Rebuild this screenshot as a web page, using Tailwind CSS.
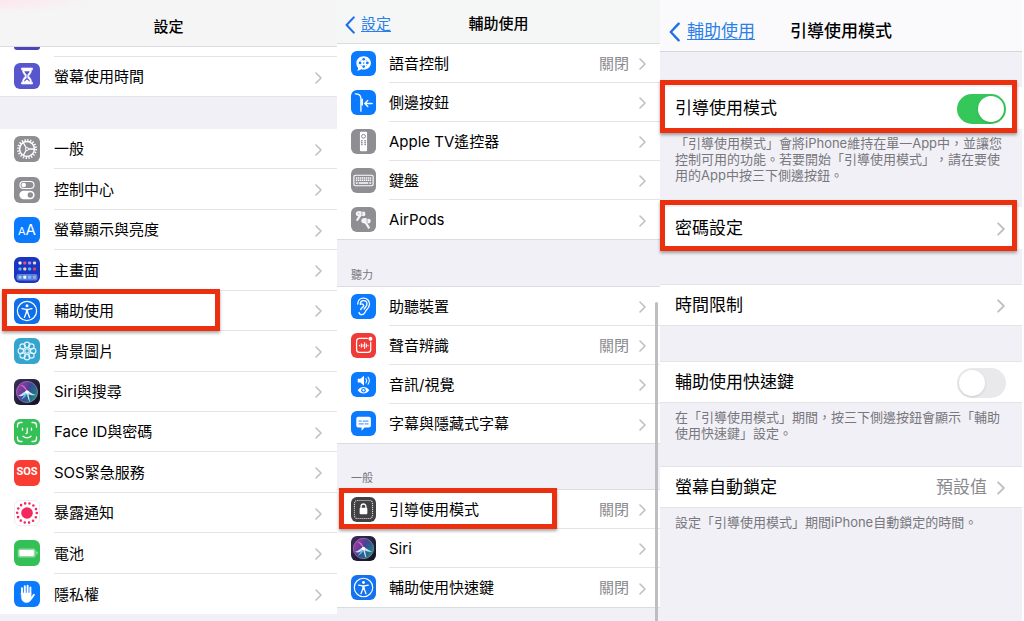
<!DOCTYPE html>
<html lang="zh-Hant">
  <head>
    <meta charset="UTF-8" />
    <meta name="viewport" content="width=device-width, initial-scale=1.0" />
    <title>引導使用模式</title>
    <script src="https://cdn.jsdelivr.net/npm/@tailwindcss/browser@4"></script>
  </head>
  <body class="bg-white text-black font-['Inter','Noto_Sans_CJK_TC',sans-serif] [text-spacing-trim:space-all]">

    <!-- shared icons -->
    <svg class="absolute size-0" aria-hidden="true">
      <defs>
        <linearGradient id="siri-bg" x1="0" y1="0" x2="1" y2="1">
          <stop offset="0" stop-color="#3a2f5c" />
          <stop offset="1" stop-color="#10121f" />
        </linearGradient>
        <linearGradient id="siri-orb" x1="0" y1="0.2" x2="1" y2="0.8">
          <stop offset="0" stop-color="#b13aa6" />
          <stop offset="0.45" stop-color="#4a3f96" />
          <stop offset="0.75" stop-color="#1f6f86" />
          <stop offset="1" stop-color="#2a9c8c" />
        </linearGradient>
      </defs>
      <symbol id="chevron" viewBox="0 0 7 12">
        <path d="M1 1l5 5-5 5" fill="none" stroke="currentColor" stroke-width="1.6" stroke-linecap="round" stroke-linejoin="round" />
      </symbol>
      <symbol id="back" viewBox="0 0 10 18">
        <path d="M8.8 1.4L1.6 9l7.2 7.6" fill="none" stroke="currentColor" stroke-width="2.1" stroke-linecap="round" stroke-linejoin="round" />
      </symbol>
      <symbol id="person" viewBox="0 0 26 26">
        <circle cx="13" cy="13" r="9.6" fill="none" stroke="#fff" stroke-width="1.2" />
        <circle cx="13" cy="7.8" r="1.5" fill="#fff" />
        <path d="M8 10.600l3.800.7h2.400l3.800-.7M13 11.600v3.200" fill="none" stroke="#fff" stroke-width="1.300" stroke-linecap="round" />
        <path d="M11.800 11.300h2.400v3.500h-2.400z" fill="#fff" />
        <path d="M12.300 14.400l-1.900 5M13.700 14.400l1.900 5" fill="none" stroke="#fff" stroke-width="1.300" stroke-linecap="round" />
      </symbol>
      <symbol id="siri" viewBox="0 0 26 26">
        <rect width="26" height="26" fill="url(#siri-bg)" />
        <circle cx="13" cy="13" r="10.6" fill="url(#siri-orb)" stroke="#9a86b8" stroke-width=".7" />
        <path d="M4 16.500c4-.5 6-4.500 9-4.500s4 3 9 4c-4 1-6-.3-7.400-.8L16 23c-2-2-2.400-5.500-3.200-8C10 15.500 8 18.500 4 16.500z" fill="#e9f6ff" opacity=".85" />
        <path d="M13 11.500C12 8 9 5.500 6.500 6 9 7.500 11 9.500 13 13z" fill="#f06ac0" />
        <path d="M13 12.500l-6 8c3-1 5-3 6.500-6z" fill="#4cc3f0" />
        <circle cx="13" cy="13" r="1.800" fill="#fff" />
      </symbol>
    </svg>

    <main class="grid min-h-screen grid-cols-[337fr_323fr_364fr]">

      <!-- Settings -->
      <section class="flex flex-col bg-[#f1f0f6] text-[15px]">
        <header class="flex h-[47px] items-center justify-center border-b border-[#dcdce0] bg-radial-[at_0%_0%] from-[#fde6ee] to-[#f5f5f5] to-20% pt-2">
          <h1 class="font-medium">設定</h1>
        </header>
        <div class="bg-white">
          <div class="h-[9px] pl-3.5">
            <span class="block h-[3px] w-[26px] rounded-b-md bg-[#4b45b5]"></span>
          </div>
          <a href="#" class="flex h-[41px] items-center gap-3.5 border-b border-[#e4e4e8] pl-3.5">
            <svg class="size-[26px] rounded-md bg-[#5856ce]" viewBox="0 0 26 26">
              <path d="M7.500 5h11v1.800h-1c0 3.200-1.600 4.700-3 6.200 1.400 1.500 3 3 3 6.200h1V21h-11v-1.800h1c0-3.200 1.600-4.700 3-6.200-1.400-1.500-3-3-3-6.200h-1z" fill="#fff" stroke="#fff" stroke-width=".6" stroke-linejoin="round" />
              <path d="M10.300 8.300h5.400c-.5 1.700-1.500 2.500-2.300 3.500v3.400c1.200.7 2.300 1.700 2.500 3.300h-5.800c.2-1.600 1.300-2.600 2.500-3.300v-3.400c-.8-1-1.800-1.800-2.300-3.500z" fill="#5856ce" />
              <path d="M10.800 19c.3-1.500 1.300-2.100 2.200-2.600.9.500 1.900 1.100 2.200 2.600z" fill="#fff" />
            </svg>
            <span class="flex flex-1 items-center justify-between self-stretch border-t border-[#e4e4e8] pt-0.5 pr-[15px]">螢幕使用時間
              <svg class="h-3 w-[7px] text-[#c0c0c4]"><use href="#chevron" /></svg>
            </span>
          </a>
        </div>

        <nav class="mt-8 mb-[7px] flex flex-1 flex-col bg-white">
          <a href="#" class="group flex min-h-10 flex-1 items-center gap-3.5 pl-3.5">
            <svg class="size-[26px] rounded-md bg-[#8e8e93]" viewBox="0 0 26 26" fill="none" stroke="#fff">
              <circle cx="13" cy="13" r="9" stroke-width="2" stroke-dasharray="1.300 1.527" />
              <circle cx="13" cy="13" r="7.400" stroke-width="1.500" />
              <circle cx="13" cy="13" r="1.500" stroke-width="1" />
              <path d="M14.500 13h5.500M12.200 11.700L9.500 7M12.200 14.300L9.500 19" stroke-width="1.300" />
            </svg>
            <span class="flex flex-1 items-center justify-between self-stretch border-b border-[#e4e4e8] pt-0.5 pr-[15px] group-last:border-0">一般
              <svg class="h-3 w-[7px] text-[#c0c0c4]"><use href="#chevron" /></svg>
            </span>
          </a>
          <a href="#" class="group flex min-h-10 flex-1 items-center gap-3.5 pl-3.5">
            <svg class="size-[26px] rounded-md bg-[#8e8e93]" viewBox="0 0 26 26">
              <rect x="6" y="4.500" width="14" height="7" rx="3.500" fill="none" stroke="#fff" stroke-width="1.200" />
              <circle cx="9.700" cy="8" r="2.300" fill="#fff" />
              <rect x="5.400" y="13.800" width="15.200" height="8.400" rx="4.200" fill="#fff" />
              <circle cx="16.300" cy="18" r="2.700" fill="#8e8e93" />
            </svg>
            <span class="flex flex-1 items-center justify-between self-stretch border-b border-[#e4e4e8] pt-0.5 pr-[15px] group-last:border-0">控制中心
              <svg class="h-3 w-[7px] text-[#c0c0c4]"><use href="#chevron" /></svg>
            </span>
          </a>
          <a href="#" class="group flex min-h-10 flex-1 items-center gap-3.5 pl-3.5">
            <span class="flex size-[26px] items-baseline justify-center rounded-md bg-[#0a7aff] leading-[26px] text-white"><span class="text-[11px]">A</span><span class="text-[15px]">A</span></span>
            <span class="flex flex-1 items-center justify-between self-stretch border-b border-[#e4e4e8] pt-0.5 pr-[15px] group-last:border-0">螢幕顯示與亮度
              <svg class="h-3 w-[7px] text-[#c0c0c4]"><use href="#chevron" /></svg>
            </span>
          </a>
          <a href="#" class="group flex min-h-10 flex-1 items-center gap-3.5 pl-3.5">
            <svg class="size-[26px] rounded-md bg-[#1a35c0]" viewBox="0 0 26 26">
              <rect x="2.500" y="17" width="21" height="6.500" rx="2" fill="#5f7fe0" />
              <g fill="#fff">
                <rect x="4.500" y="4.500" width="3" height="3" rx=".8" />
                <rect x="9.300" y="4.500" width="3" height="3" rx=".8" fill="#e0507c" />
                <rect x="14.100" y="4.500" width="3" height="3" rx=".8" fill="#b48cf0" />
                <rect x="19" y="4.500" width="3" height="3" rx=".8" fill="#d8dcc0" />
                <rect x="4.500" y="10.500" width="3" height="3" rx=".8" fill="#4fb4ff" />
                <rect x="9.300" y="10.500" width="3" height="3" rx=".8" fill="#f0d890" />
                <rect x="14.100" y="10.500" width="3" height="3" rx=".8" fill="#50b8ff" />
                <rect x="19" y="10.500" width="3" height="3" rx=".8" fill="#e0405c" />
                <rect x="4.500" y="18.700" width="3" height="3" rx=".8" fill="#8fe0c0" />
                <rect x="9.300" y="18.700" width="3" height="3" rx=".8" />
                <rect x="14.100" y="18.700" width="3" height="3" rx=".8" fill="#6cc4ff" />
                <rect x="19" y="18.700" width="3" height="3" rx=".8" fill="#a8a8b8" />
              </g>
            </svg>
            <span class="flex flex-1 items-center justify-between self-stretch border-b border-[#e4e4e8] pt-0.5 pr-[15px] group-last:border-0">主畫面
              <svg class="h-3 w-[7px] text-[#c0c0c4]"><use href="#chevron" /></svg>
            </span>
          </a>
          <a href="#" class="group relative flex min-h-10 flex-1 items-center gap-3.5 pl-3.5">
            <svg class="size-[26px] rounded-md bg-[#0f6fe8]"><use href="#person" /></svg>
            <span class="flex flex-1 items-center justify-between self-stretch border-b border-[#e4e4e8] pt-0.5 pr-[15px] group-last:border-0">輔助使用
              <svg class="h-3 w-[7px] text-[#c0c0c4]"><use href="#chevron" /></svg>
            </span>
            <span class="absolute -top-0.5 bottom-0 left-0.5 w-[218px] border-5 border-[#eb3010] shadow-[0_2px_3px_rgba(0,0,0,0.35)]"></span>
          </a>
          <a href="#" class="group flex min-h-10 flex-1 items-center gap-3.5 pl-3.5">
            <svg class="size-[26px] rounded-md bg-[#35a5cf]" viewBox="0 0 26 26" fill="none" stroke="#e4f6fc" stroke-width="1.100">
              <circle cx="13" cy="13" r="2.200" />
              <circle cx="13" cy="6.800" r="2.700" />
              <circle cx="17.400" cy="8.600" r="2.700" />
              <circle cx="19.200" cy="13" r="2.700" />
              <circle cx="17.400" cy="17.400" r="2.700" />
              <circle cx="13" cy="19.200" r="2.700" />
              <circle cx="8.600" cy="17.400" r="2.700" />
              <circle cx="6.800" cy="13" r="2.700" />
              <circle cx="8.600" cy="8.600" r="2.700" />
            </svg>
            <span class="flex flex-1 items-center justify-between self-stretch border-b border-[#e4e4e8] pt-0.5 pr-[15px] group-last:border-0">背景圖片
              <svg class="h-3 w-[7px] text-[#c0c0c4]"><use href="#chevron" /></svg>
            </span>
          </a>
          <a href="#" class="group flex min-h-10 flex-1 items-center gap-3.5 pl-3.5">
            <svg class="size-[26px] rounded-md"><use href="#siri" /></svg>
            <span class="flex flex-1 items-center justify-between self-stretch border-b border-[#e4e4e8] pt-0.5 pr-[15px] group-last:border-0">Siri與搜尋
              <svg class="h-3 w-[7px] text-[#c0c0c4]"><use href="#chevron" /></svg>
            </span>
          </a>
          <a href="#" class="group flex min-h-10 flex-1 items-center gap-3.5 pl-3.5">
            <svg class="size-[26px] rounded-md bg-[#34c056]" viewBox="0 0 26 26" fill="none" stroke="#fff" stroke-width="1.300" stroke-linecap="round">
              <path d="M3.500 8V6.500a3 3 0 013-3H8M18 3.500h1.500a3 3 0 013 3V8M22.500 18v1.500a3 3 0 01-3 3H18M8 22.500H6.500a3 3 0 01-3-3V18" />
              <path d="M8.500 9.200v2M17.500 9.200v2M13.200 9.200v4.300c0 .8-.4 1.100-1.200 1.100M9 17.300c2.200 2 5.800 2 8 0" />
            </svg>
            <span class="flex flex-1 items-center justify-between self-stretch border-b border-[#e4e4e8] pt-0.5 pr-[15px] group-last:border-0">Face ID與密碼
              <svg class="h-3 w-[7px] text-[#c0c0c4]"><use href="#chevron" /></svg>
            </span>
          </a>
          <a href="#" class="group flex min-h-10 flex-1 items-center gap-3.5 pl-3.5">
            <span class="flex size-[26px] items-center justify-center rounded-md bg-[#f93d33] font-[Roboto,sans-serif] text-[11px] font-bold text-white">SOS</span>
            <span class="flex flex-1 items-center justify-between self-stretch border-b border-[#e4e4e8] pt-0.5 pr-[15px] group-last:border-0">SOS緊急服務
              <svg class="h-3 w-[7px] text-[#c0c0c4]"><use href="#chevron" /></svg>
            </span>
          </a>
          <a href="#" class="group flex min-h-10 flex-1 items-center gap-3.5 pl-3.5">
            <svg class="size-[26px] rounded-md border border-[#efedf1] bg-white" viewBox="1 1 24 24">
              <circle cx="13" cy="13" r="5.800" fill="#f4285c" />
              <circle cx="13" cy="13" r="9.800" fill="none" stroke="#f4285c" stroke-width="2.600" stroke-linecap="round" stroke-dasharray="0 4.398" />
            </svg>
            <span class="flex flex-1 items-center justify-between self-stretch border-b border-[#e4e4e8] pt-0.5 pr-[15px] group-last:border-0">暴露通知
              <svg class="h-3 w-[7px] text-[#c0c0c4]"><use href="#chevron" /></svg>
            </span>
          </a>
          <a href="#" class="group flex min-h-10 flex-1 items-center gap-3.5 pl-3.5">
            <svg class="size-[26px] rounded-md bg-[#34c056]" viewBox="0 0 26 26">
              <rect x="3.800" y="8.500" width="17.800" height="9" rx="2.600" fill="#8edc9e" />
              <rect x="5.500" y="10" width="14.400" height="6" rx="1.300" fill="#fff" />
              <path d="M22.500 11.300c1.400.3 1.400 3.100 0 3.400z" fill="#c4efcc" />
            </svg>
            <span class="flex flex-1 items-center justify-between self-stretch border-b border-[#e4e4e8] pt-0.5 pr-[15px] group-last:border-0">電池
              <svg class="h-3 w-[7px] text-[#c0c0c4]"><use href="#chevron" /></svg>
            </span>
          </a>
          <a href="#" class="group flex min-h-10 flex-1 items-center gap-3.5 pl-3.5">
            <svg class="size-[26px] rounded-md bg-[#0a7aff]" viewBox="0 0 26 26" fill="#fff" stroke="#fff" stroke-linecap="round">
              <path d="M8 13V7.200M10.800 12V5.200M13.600 12V4.600M16.400 12V6.400M17.300 17.500l2.600-3.700" stroke-width="1.900" />
              <path d="M7.400 12h9.700v3.500l.7.800c-.5 3-2 5.200-5.100 5.200-3.500 0-5.300-2.300-5.300-6z" stroke-width=".6" />
            </svg>
            <span class="flex flex-1 items-center justify-between self-stretch border-b border-[#e4e4e8] pt-0.5 pr-[15px] group-last:border-0">隱私權
              <svg class="h-3 w-[7px] text-[#c0c0c4]"><use href="#chevron" /></svg>
            </span>
          </a>
        </nav>
      </section>

      <!-- Accessibility -->
      <section class="relative flex flex-col bg-[#f1f0f6] text-[15px]">
        <header class="grid h-11 grid-cols-[1fr_auto_1fr] items-center border-b border-[#dcdce0] bg-[#f5f6f6] px-2 pt-1.5">
          <a href="#" class="flex items-center gap-1.5 text-[#2b7fe6] underline underline-offset-2">
            <svg class="h-[18px] w-2.5 text-[#1c6fe8]"><use href="#back" /></svg>設定
          </a>
          <h1 class="font-medium">輔助使用</h1>
        </header>

        <nav class="border-b border-[#dcdce0] bg-white">
          <a href="#" class="group flex h-[39px] items-center gap-[13px] pl-3.5">
            <svg class="size-[25px] rounded-md bg-[#0a7aff]" viewBox="0 0 26 26">
              <path d="M13.200 5.500c4.300 0 7.500 3 7.500 6.900s-3.200 6.900-7.500 6.900c-1 0-2-.1-2.800-.4-1.200 1-2.600 1.500-4.200 1.500.9-.8 1.300-1.800 1.300-2.800-1.200-1.300-1.900-3.100-1.900-5.200 0-3.900 3.300-6.900 7.600-6.900z" fill="#fff" />
              <g fill="#0a7aff">
                <circle cx="13.200" cy="8.600" r="1.400" /><circle cx="13.200" cy="16.200" r="1.400" />
                <circle cx="9.400" cy="12.400" r="1.400" /><circle cx="17" cy="12.400" r="1.400" />
                <circle cx="13.200" cy="12.400" r=".8" />
                <circle cx="10.500" cy="9.700" r=".5" /><circle cx="15.900" cy="9.700" r=".5" />
                <circle cx="10.500" cy="15.100" r=".5" /><circle cx="15.900" cy="15.100" r=".5" />
              </g>
            </svg>
            <span class="flex flex-1 items-center gap-2.5 self-stretch border-b border-[#e4e4e8] pt-0.5 pr-3.5 group-last:border-0"><span class="flex-1">語音控制</span>
              <span class="text-[#8a8a8e]">關閉</span>
              <svg class="h-3 w-[7px] text-[#c0c0c4]"><use href="#chevron" /></svg>
            </span>
          </a>
          <a href="#" class="group flex h-[39px] items-center gap-[13px] pl-3.5">
            <svg class="size-[25px] rounded-md bg-[#0a7aff]" viewBox="0 0 26 26" fill="none" stroke="#fff" stroke-width="1.400" stroke-linecap="round" stroke-linejoin="round">
              <path d="M4.500 4c4 0 5.800 1.600 5.800 5v13M11.800 9.500v6M22 14h-7.500M17.500 10.800L14.300 14l3.200 3.200" />
            </svg>
            <span class="flex flex-1 items-center justify-between self-stretch border-b border-[#e4e4e8] pt-0.5 pr-3.5 group-last:border-0">側邊按鈕
              <svg class="h-3 w-[7px] text-[#c0c0c4]"><use href="#chevron" /></svg>
            </span>
          </a>
          <a href="#" class="group flex h-[39px] items-center gap-[13px] pl-3.5">
            <svg class="size-[25px] rounded-md bg-[#8e8e93]" viewBox="0 0 26 26">
              <rect x="9.300" y="2.800" width="7.400" height="20.400" rx="1.200" fill="#fff" />
              <g fill="none" stroke="#85858a">
                <circle cx="13" cy="7.600" r="2" stroke-width="1" />
                <path d="M11.300 11.500v5.500M14.700 11.500v5.500" stroke-width="1.500" stroke-dasharray="1.500 .6" />
              </g>
            </svg>
            <span class="flex flex-1 items-center justify-between self-stretch border-b border-[#e4e4e8] pt-0.5 pr-3.5 group-last:border-0">Apple TV遙控器
              <svg class="h-3 w-[7px] text-[#c0c0c4]"><use href="#chevron" /></svg>
            </span>
          </a>
          <a href="#" class="group flex h-[39px] items-center gap-[13px] pl-3.5">
            <svg class="size-[25px] rounded-md bg-[#8e8e93]" viewBox="0 0 26 26" fill="none" stroke="#fff">
              <rect x="3" y="7.500" width="20" height="11" rx="1.500" stroke-width="1.200" />
              <path d="M5 10.300h16M5 12.800h16" stroke-width="1.500" stroke-dasharray="1.500 .6" />
              <path d="M5 15.600h2M8 15.600h10M19 15.600h2" stroke-width="1.500" />
            </svg>
            <span class="flex flex-1 items-center justify-between self-stretch border-b border-[#e4e4e8] pt-0.5 pr-3.5 group-last:border-0">鍵盤
              <svg class="h-3 w-[7px] text-[#c0c0c4]"><use href="#chevron" /></svg>
            </span>
          </a>
          <a href="#" class="group flex h-[39px] items-center gap-[13px] pl-3.5">
            <svg class="size-[25px] rounded-md bg-[#8e8e93]" viewBox="0 0 26 26">
              <g fill="#f4f4f5">
                <ellipse cx="8.600" cy="7" rx="3.600" ry="2.900" />
                <ellipse cx="13" cy="7.200" rx="2" ry="2.500" />
                <ellipse cx="14.300" cy="14.300" rx="3.600" ry="2.900" />
                <ellipse cx="18.500" cy="14.600" rx="2" ry="2.500" />
              </g>
              <path d="M9.500 9l-3 4.300M15.500 16.500l3 5" stroke="#f4f4f5" stroke-width="2.300" stroke-linecap="round" />
              <path d="M11.300 5.200v3.600M16.700 12.600v3.500M7.200 6.500l1.300 1" stroke="#8e8e93" stroke-width=".7" />
            </svg>
            <span class="flex flex-1 items-center justify-between self-stretch border-b border-[#e4e4e8] pt-0.5 pr-3.5 group-last:border-0">AirPods
              <svg class="h-3 w-[7px] text-[#c0c0c4]"><use href="#chevron" /></svg>
            </span>
          </a>
        </nav>

        <h2 class="flex h-[46px] items-end pb-0.5 pl-3.5 text-[11px] leading-[18px] text-[#77777c]">聽力</h2>
        <nav class="border-y border-[#dcdce0] bg-white">
          <a href="#" class="group flex h-[39px] items-center gap-[13px] pl-3.5">
            <svg class="size-[25px] rounded-md bg-[#0a7aff]" viewBox="0 0 26 26" fill="none" stroke="#fff" stroke-width="1.400" stroke-linecap="round">
              <path d="M7 10.500C7 6.800 9.600 4.300 13 4.300s6.300 2.600 6.300 6.200c0 3.200-1.600 4.800-3.400 6.500-1.400 1.400-1.500 4.500-4.600 4.500-1.600 0-2.600-.8-2.900-2.200" />
              <path d="M9.700 10.500c0-2.100 1.400-3.600 3.400-3.600s3.500 1.500 3.500 3.600c0 2.600-2.200 3.300-2.900 5.200M9.700 10.800c2.500-1.300 4.300.6 3 2.400-.9 1.200-2.200 1.500-2.600 3" />
            </svg>
            <span class="flex flex-1 items-center justify-between self-stretch border-b border-[#e4e4e8] pt-0.5 pr-3.5 group-last:border-0">助聽裝置
              <svg class="h-3 w-[7px] text-[#c0c0c4]"><use href="#chevron" /></svg>
            </span>
          </a>
          <a href="#" class="group flex h-[39px] items-center gap-[13px] pl-3.5">
            <svg class="size-[25px] rounded-md bg-[#ee3b37]" viewBox="0 0 26 26" fill="none" stroke="#fff" stroke-linecap="round">
              <path d="M17 5.500H8.800a3 3 0 00-3 3v8.700a3 3 0 003 3h8.700a3 3 0 003-3V9.500" stroke-width="1.300" />
              <path d="M8.800 12.800v.4M10.700 11.200v3.600M12.500 12v2M14.200 9.800v6.400M16 11.500v3M17.700 12.700v.6" stroke-width="1.100" />
              <circle cx="20.200" cy="6" r="2.100" fill="#fff" stroke="none" />
            </svg>
            <span class="flex flex-1 items-center gap-2.5 self-stretch border-b border-[#e4e4e8] pt-0.5 pr-3.5 group-last:border-0"><span class="flex-1">聲音辨識</span>
              <span class="text-[#8a8a8e]">關閉</span>
              <svg class="h-3 w-[7px] text-[#c0c0c4]"><use href="#chevron" /></svg>
            </span>
          </a>
          <a href="#" class="group flex h-[39px] items-center gap-[13px] pl-3.5">
            <svg class="size-[25px] rounded-md bg-[#0a7aff]" viewBox="0 0 26 26">
              <path d="M7 7h2.700l3.800-3.200v10.400L9.700 11H7z" fill="#fff" />
              <path d="M15.500 6.700c1 1.400 1 3.200 0 4.600M17.700 5.300c1.700 2.300 1.700 5.100 0 7.400" fill="none" stroke="#fff" stroke-width="1.100" stroke-linecap="round" />
              <path d="M7 19c3.200-4.400 8.800-4.400 12 0-3.200 4.400-8.800 4.400-12 0z" fill="#fff" />
              <circle cx="13" cy="19" r="2.400" fill="#0a7aff" />
              <circle cx="13" cy="19" r="1.200" fill="#fff" />
            </svg>
            <span class="flex flex-1 items-center justify-between self-stretch border-b border-[#e4e4e8] pt-0.5 pr-3.5 group-last:border-0">音訊/視覺
              <svg class="h-3 w-[7px] text-[#c0c0c4]"><use href="#chevron" /></svg>
            </span>
          </a>
          <a href="#" class="group flex h-[39px] items-center gap-[13px] pl-3.5">
            <svg class="size-[25px] rounded-md bg-[#0a7aff]" viewBox="0 0 26 26">
              <path d="M7.500 6h11.200a2 2 0 012 2v7.200a2 2 0 01-2 2h-4.500L11 20.500v-3.300H7.500a2 2 0 01-2-2V8a2 2 0 012-2z" fill="#fff" />
              <path d="M7.800 10.500h3.400M12.200 10.500h6M7.800 13.300h5.500M14.300 13.300h3.900" stroke="#5aa4ff" stroke-width="1.300" />
            </svg>
            <span class="flex flex-1 items-center justify-between self-stretch border-b border-[#e4e4e8] pt-0.5 pr-3.5 group-last:border-0">字幕與隱藏式字幕
              <svg class="h-3 w-[7px] text-[#c0c0c4]"><use href="#chevron" /></svg>
            </span>
          </a>
        </nav>

        <h2 class="flex h-[45px] items-end pb-0.5 pl-3.5 text-[11px] leading-[18px] text-[#77777c]">一般</h2>
        <nav class="border-y border-[#dcdce0] bg-white">
          <a href="#" class="group relative flex h-[39px] items-center gap-[13px] pl-3.5">
            <svg class="size-[25px] rounded-md bg-[#414143]" viewBox="0 0 26 26" fill="none">
              <rect x="3.600" y="3.600" width="18.800" height="18.800" rx="3" stroke="#d4d4d6" stroke-width="1.200" stroke-dasharray="1.200 .9" />
              <path d="M10.500 12V9.800a2.500 2.500 0 015 0V12" stroke="#fff" stroke-width="1.400" />
              <rect x="9" y="11.300" width="8" height="6.700" rx="1" fill="#fff" />
            </svg>
            <span class="flex flex-1 items-center gap-2.5 self-stretch border-b border-[#e4e4e8] pt-0.5 pr-3.5 group-last:border-0"><span class="flex-1">引導使用模式</span>
              <span class="text-[#8a8a8e]">關閉</span>
              <svg class="h-3 w-[7px] text-[#c0c0c4]"><use href="#chevron" /></svg>
            </span>
            <span class="absolute -top-0.5 bottom-0 left-0.5 w-[218px] border-5 border-[#eb3010] shadow-[0_2px_3px_rgba(0,0,0,0.35)]"></span>
          </a>
          <a href="#" class="group flex h-[39px] items-center gap-[13px] pl-3.5">
            <svg class="size-[25px] rounded-md"><use href="#siri" /></svg>
            <span class="flex flex-1 items-center justify-between self-stretch border-b border-[#e4e4e8] pt-0.5 pr-3.5 group-last:border-0">Siri
              <svg class="h-3 w-[7px] text-[#c0c0c4]"><use href="#chevron" /></svg>
            </span>
          </a>
          <a href="#" class="group flex h-[39px] items-center gap-[13px] pl-3.5">
            <svg class="size-[25px] rounded-md bg-[#1372ee]"><use href="#person" /></svg>
            <span class="flex flex-1 items-center gap-2.5 self-stretch border-b border-[#e4e4e8] pt-0.5 pr-3.5 group-last:border-0"><span class="flex-1">輔助使用快速鍵</span>
              <span class="text-[#8a8a8e]">關閉</span>
              <svg class="h-3 w-[7px] text-[#c0c0c4]"><use href="#chevron" /></svg>
            </span>
          </a>
        </nav>

        <!-- scroll indicator -->
        <span class="absolute top-[302px] right-0.5 bottom-0 w-[3px] rounded-t-full bg-[#bebec2]"></span>
      </section>

      <!-- Guided Access -->
      <section class="flex flex-col border-r-2 border-white bg-[#f1f0f6] text-[17px]">
        <header class="grid h-[52px] grid-cols-[1fr_auto_1fr] items-center border-b border-[#d6d6da] bg-[#fafafc] px-[9px] pt-3">
          <a href="#" class="flex items-center gap-[7px] text-[#2b7fe6] underline underline-offset-2">
            <svg class="h-5 w-[11px] text-[#1c6fe8]"><use href="#back" /></svg>輔助使用
          </a>
          <h1 class="font-medium">引導使用模式</h1>
        </header>

        <div class="relative mt-[35px] flex h-[42px] items-center justify-between bg-white pt-0.5 pr-4 pl-[15px]">
          <label for="guided-access">引導使用模式</label>
          <input type="checkbox" id="guided-access" checked class="h-[30px] w-[49px] appearance-none rounded-full bg-[#e9e9eb] p-0.5 before:block before:size-[26px] before:rounded-full before:bg-white before:shadow-sm checked:bg-[#35c759] checked:before:ml-[19px]" />
          <span class="pointer-events-none absolute -top-[7px] right-[5px] -bottom-1 left-0 border-5 border-[#eb3010] shadow-[0_2px_3px_rgba(0,0,0,0.35)]"></span>
        </div>
        <p class="mt-1.5 pl-[15px] text-[13px] leading-4 whitespace-nowrap text-[#77777c]">「引導使用模式」會將iPhone維持在單一App中，並讓您<br />控制可用的功能。若要開始「引導使用模式」，請在要使<br />用的App中按三下側邊按鈕。</p>

        <a href="#" class="relative mt-6 flex h-[42px] items-center justify-between bg-white pt-0.5 pr-[17px] pl-[15px]">密碼設定
          <svg class="h-3.5 w-2 text-[#c0c0c4]"><use href="#chevron" /></svg>
          <span class="absolute -top-[7px] right-[5px] -bottom-0.5 left-0 border-5 border-[#eb3010] shadow-[0_2px_3px_rgba(0,0,0,0.35)]"></span>
        </a>

        <a href="#" class="mt-[35px] flex h-[42px] items-center justify-between border-y border-[#e4e4e8] bg-white pt-0.5 pr-[17px] pl-[15px]">時間限制
          <svg class="h-3.5 w-2 text-[#c0c0c4]"><use href="#chevron" /></svg>
        </a>

        <div class="mt-[35px] flex h-[42px] items-center justify-between border-y border-[#e4e4e8] bg-white pt-0.5 pr-4 pl-[15px]">
          <label for="shortcut">輔助使用快速鍵</label>
          <input type="checkbox" id="shortcut" class="h-[30px] w-[49px] appearance-none rounded-full bg-[#e9e9eb] p-0.5 before:block before:size-[26px] before:rounded-full before:bg-white before:shadow-sm checked:bg-[#35c759] checked:before:ml-[19px]" />
        </div>
        <p class="mt-1.5 pl-[15px] text-[13px] leading-4 whitespace-nowrap text-[#77777c]">在「引導使用模式」期間，按三下側邊按鈕會顯示「輔助<br />使用快速鍵」設定。</p>

        <a href="#" class="mt-[25px] flex h-[42px] items-center gap-2.5 border-y border-[#e4e4e8] bg-white pt-0.5 pr-[17px] pl-[15px]"><span class="flex-1">螢幕自動鎖定</span>
          <span class="text-[#8a8a8e]">預設值</span>
          <svg class="h-3.5 w-2 text-[#c0c0c4]"><use href="#chevron" /></svg>
        </a>
        <p class="mt-1.5 pl-[15px] text-[13px] leading-4 whitespace-nowrap text-[#77777c]">設定「引導使用模式」期間iPhone自動鎖定的時間。</p>
      </section>

    </main>
  </body>
</html>
